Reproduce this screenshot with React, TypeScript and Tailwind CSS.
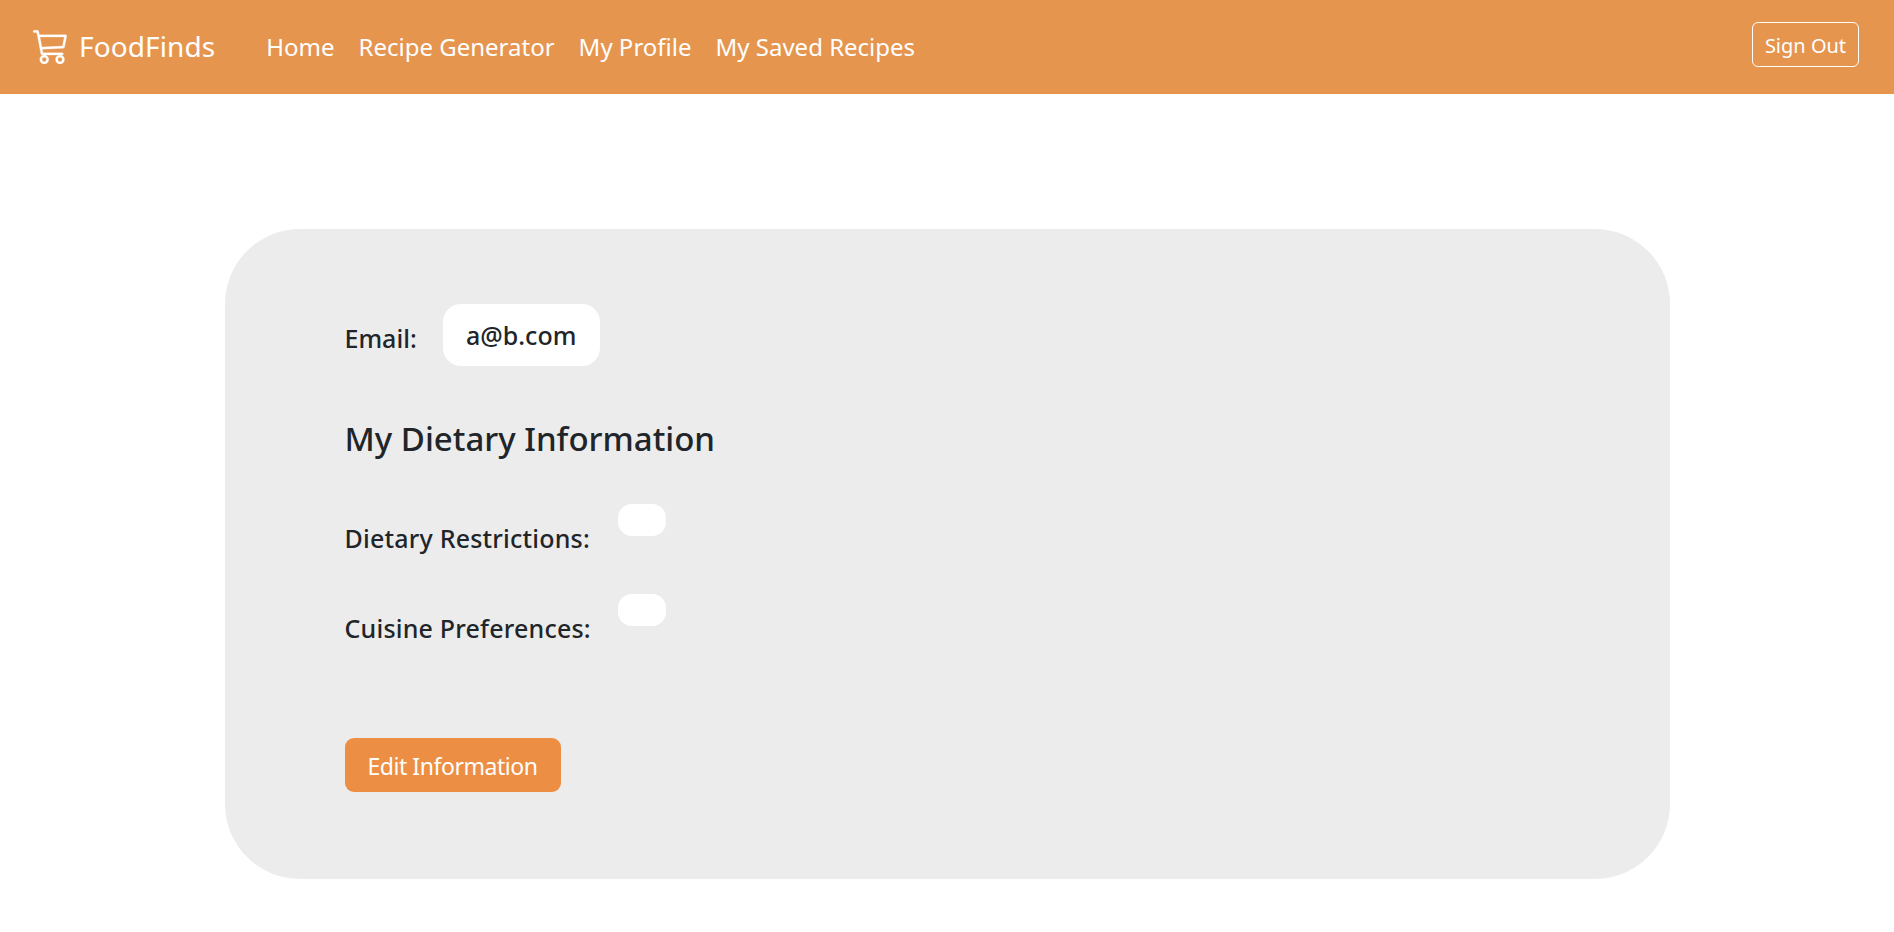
const font = "font-['Noto_Sans','Open_Sans',sans-serif]";

function CartIcon() {
  return (
    <svg className="w-[36px] h-[36px] -mt-[3px] text-white" fill="currentColor" stroke="currentColor" strokeWidth={0.12} viewBox="0 0 16 16">
      <path d="M0 1.5A.5.5 0 0 1 .5 1H2a.5.5 0 0 1 .485.379L2.89 3H14.5a.5.5 0 0 1 .49.598l-1 5a.5.5 0 0 1-.465.401l-9.397.472L4.415 11H13a.5.5 0 0 1 0 1H4a.5.5 0 0 1-.491-.408L2.01 3.607 1.61 2H.5a.5.5 0 0 1-.5-.5M3.102 4l.84 4.479 9.144-.459L13.89 4zM5 12a2 2 0 1 0 0 4 2 2 0 0 0 0-4m7 0a2 2 0 1 0 0 4 2 2 0 0 0 0-4m-7 1a1 1 0 1 1 0 2 1 1 0 0 1 0-2m7 0a1 1 0 1 1 0 2 1 1 0 0 1 0-2" />
    </svg>
  );
}

const links = ['Home', 'Recipe Generator', 'My Profile', 'My Saved Recipes'];

export default function App() {
  return (
    <div className={`min-h-[932px] bg-white text-[#212529] ${font}`}>
      {/* Navbar */}
      <nav className="h-[94px] bg-[#e6954f] flex items-center pl-[33px] pr-[35px] text-white">
        <a href="#" className="flex items-center gap-[10px] text-[28px] tracking-[0.1px]">
          <CartIcon />
          <span className="-mt-[3px]">FoodFinds</span>
        </a>
        <div className="flex items-center gap-6 ml-[51px] text-2xl">
          {links.map((link) => (
            <a key={link} href="#">{link}</a>
          ))}
        </div>
        <button className="ml-auto -mt-[5px] pt-[2px] w-[107px] h-[45px] border border-white rounded-md text-xl">
          Sign Out
        </button>
      </nav>

      {/* Profile card */}
      <main className="w-[1445px] h-[650px] mx-auto mt-[135px] bg-[#ececec] rounded-[75px] pt-[75px] pl-[120px]">
        <div className="flex items-center">
          <span className="text-[25px] font-medium mt-[7px]">Email:</span>
          <span className="ml-[26px] pt-[2px] w-[157px] h-[62px] bg-white rounded-[18px] flex items-center justify-center text-[25px] font-medium">
            a@b.com
          </span>
        </div>

        <h2 className="mt-[49px] text-[33px] leading-[48px] font-medium">
          My Dietary Information
        </h2>

        <div className="mt-[41px] flex items-start">
          <span className="w-[273px] mt-[16px] text-[25px] tracking-[0.2px] leading-9 font-medium">Dietary Restrictions:</span>
          <span className="w-[48px] h-[32px] bg-white rounded-[14px]" />
        </div>
        <div className="mt-[38px] flex items-start">
          <span className="w-[273px] mt-[16px] text-[25px] tracking-[0.2px] leading-9 font-medium">Cuisine Preferences:</span>
          <span className="w-[48px] h-[32px] bg-white rounded-[14px]" />
        </div>

        <button className="mt-[92px] pt-[2px] w-[216px] h-[54px] bg-[#ec8f44] rounded-[9px] text-white text-[23px] tracking-[-0.45px]">
          Edit Information
        </button>
      </main>
    </div>
  );
}
